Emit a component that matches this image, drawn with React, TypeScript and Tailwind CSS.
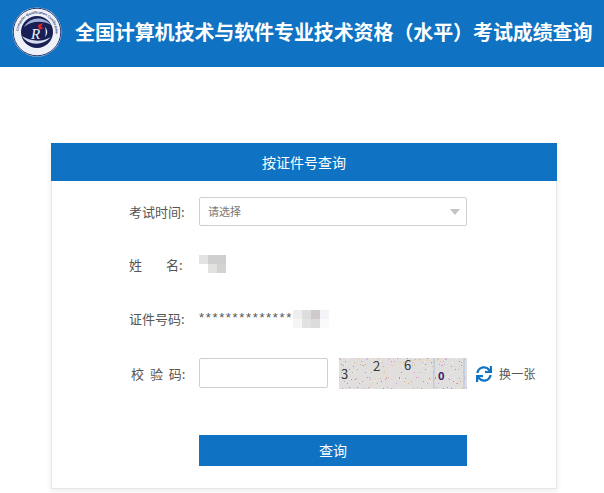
import { FaSync } from "react-icons/fa";

const font = { fontFamily: '"Noto Sans CJK SC", sans-serif' };

function Logo() {
  return (
    <svg width="50" height="50" viewBox="0 0 50 50" className="shrink-0">
      <circle cx="25" cy="25" r="24.5" fill="#eef1f7" />
      <circle cx="25" cy="25" r="23.8" fill="none" stroke="#27336b" strokeWidth="1" />
      <defs>
        <path id="ring" d="M25 25 m-18.5 0 a18.5 18.5 0 1 1 37 0 a18.5 18.5 0 1 1 -37 0" />
      </defs>
      <text fontSize="3.4" fill="#27336b" fontWeight="700" style={{ fontFamily: '"Liberation Sans", sans-serif' }}>
        <textPath href="#ring" startOffset="1%">
          Computer Qualification Certification
        </textPath>
      </text>
      <circle cx="25" cy="25" r="16" fill="#181f55" />
      <path d="M10 29c5 9 20 11 29 1-8 5-20 5-29-1z" fill="#d5dcee" />
      <path d="M39 18C33 9 18 9 12 20c7-6 19-7 27-2z" fill="#9fb0d8" />
      <path d="M33 20c3 3 3 7 0 10 1-3 1-7 0-10z" fill="#dfe5f3" />
      <text x="19" y="32" fontSize="15" fontStyle="italic" fill="#f2f4fa" style={{ fontFamily: '"Liberation Serif", serif' }}>
        R
      </text>
      <path d="M26 18l5-2-2 4 3 1-5 2z" fill="#d8262c" />
    </svg>
  );
}

function Mosaic({ cols, cell, colors }: { cols: number; cell: number; colors: string[] }) {
  return (
    <div className="grid" style={{ gridTemplateColumns: `repeat(${cols}, ${cell}px)`, gridAutoRows: `${cell}px` }}>
      {colors.map((c, i) => (
        <div key={i} style={{ backgroundColor: c }} />
      ))}
    </div>
  );
}

function Captcha() {
  const tints = ["#9a9ad0", "#d59ad0", "#8fc79a", "#e0b080", "#7f9fd0", "#f4f4f4"];
  const dots = Array.from({ length: 170 }, (_, i) => ({
    x: (i * 47) % 128,
    y: (i * i * 13 + i * 7) % 31,
    c: tints[i % tints.length],
  }));
  return (
    <div className="relative w-[128px] h-[31px] bg-[#e0dfdd] overflow-hidden ml-[11px]">
      <svg width="128" height="31" className="absolute inset-0">
        {dots.map((d, i) => (
          <rect key={i} x={d.x} y={d.y} width="1" height="1" fill={d.c} />
        ))}
        <path d="M30 31C34 20 48 6 70 3c14-2 24 0 32 0" fill="none" stroke="#ecd9bd" />
        <path d="M51 0v31" stroke="#f0d8e8" />
        <path d="M95 0c1 10-1 20 0 31" fill="none" stroke="#a9c4e6" />
        <path d="M125 0v31" stroke="#a9c4e6" />
      </svg>
      <span className="absolute left-[2px] top-[9px] text-[13px] leading-[14px] text-[#2f3a34]">3</span>
      <span className="absolute left-[34px] top-[1px] text-[13px] leading-[14px] text-[#3a3a2c]">2</span>
      <span className="absolute left-[65px] top-[0px] text-[13px] leading-[14px] text-[#2f3a45]">6</span>
      <span className="absolute left-[99px] top-[10px] text-[11px] leading-[14px] font-bold text-[#3a1a70]">0</span>
    </div>
  );
}

function Label({ children }: { children: React.ReactNode }) {
  return <div className="w-[133px] shrink-0 pl-[77px] text-[13px] leading-[20px] text-[#555] whitespace-pre">{children}</div>;
}

export default function App() {
  return (
    <div className="w-[604px] h-[493px] bg-white overflow-hidden" style={font}>
      <header className="h-[67px] bg-[#0f72c2] flex items-center pl-[12px] pb-[3px]">
        <Logo />
        <h1 className="ml-[13px] text-[20px] leading-[28px] font-bold text-white whitespace-nowrap tracking-[-0.1px]">
          全国计算机技术与软件专业技术资格（水平）考试成绩查询
        </h1>
      </header>

      <main className="w-[506px] h-[346px] ml-[51px] mt-[76px] bg-white border-x border-b border-[#e8e8e8] shadow-[0_2px_6px_rgba(0,0,0,0.08)]">
        <div className="-mx-px h-[38px] bg-[#0f72c2] flex items-center justify-center text-[14px] text-white">
          按证件号查询
        </div>

        <div className="flex items-center mt-[16px] h-[29px]">
          <Label>考试时间:</Label>
          <div className="ml-[14px] w-[268px] h-[29px] border border-[#cfcfcf] rounded-[2px] flex items-center justify-between pl-[8px] pr-[6px]">
            <span className="text-[11px] text-[#777]">请选择</span>
            <span className="w-0 h-0 border-x-[5px] border-x-transparent border-t-[6px] border-t-[#c4c4c4]" />
          </div>
        </div>

        <div className="flex items-center mt-[24px] h-[29px]">
          <Label>
            <span className="inline-block w-[37px]">姓</span>名:
          </Label>
          <div className="ml-[14px] -mt-[2px]">
            <Mosaic
              cols={3}
              cell={9}
              colors={["#e3e3e3", "#cfcfcf", "#cfcfcf", "#ffffff", "#e2e2e0", "#d3d3d3"]}
            />
          </div>
        </div>

        <div className="flex items-center mt-[25px] h-[29px]">
          <Label>证件号码:</Label>
          <div className="ml-[14px] flex items-center">
            <span className="text-[13px] leading-[12px] text-[#555] tracking-[1.65px] -mt-[2px]" style={{ fontFamily: '"Liberation Sans", sans-serif' }}>
              **************
            </span>
            <Mosaic
              cols={4}
              cell={9}
              colors={["#eeeeee", "#dddddd", "#cfcbcb", "#f2f4fa", "#f5f5f5", "#e2e2e2", "#dcdcdc", "#fafafa"]}
            />
          </div>
        </div>

        <div className="flex items-center mt-[25px] h-[31px]">
          <Label>
            <span className="ml-[2px] [word-spacing:3px]">校 验 码:</span>
          </Label>
          <input className="ml-[14px] -mt-[2px] w-[129px] h-[30px] border border-[#cfcfcf] rounded-[2px] bg-white" />
          <Captcha />
          <FaSync className="ml-[9px] text-[16px] text-[#0f72c2]" />
          <span className="ml-[7px] text-[12px] tracking-[0.2px] text-[#555]">换一张</span>
        </div>

        <button className="block ml-[147px] mt-[46px] w-[268px] h-[31px] bg-[#0f72c2] text-white text-[14px]">查询</button>
      </main>
    </div>
  );
}
